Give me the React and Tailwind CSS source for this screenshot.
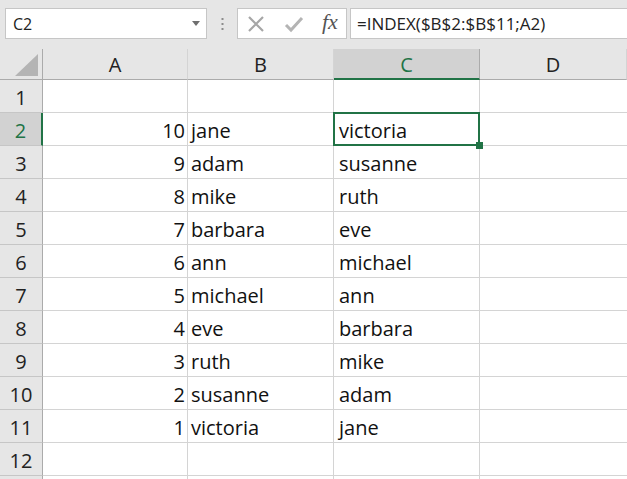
import React from "react";

const cols = ["A", "B", "C", "D"];
const widths = ["w-[145px]", "w-[146px]", "w-[146px]", "w-[147px]"];

const data = [
    ["", "", ""],
    ["10", "jane", "victoria"],
    ["9", "adam", "susanne"],
    ["8", "mike", "ruth"],
    ["7", "barbara", "eve"],
    ["6", "ann", "michael"],
    ["5", "michael", "ann"],
    ["4", "eve", "barbara"],
    ["3", "ruth", "mike"],
    ["2", "susanne", "adam"],
    ["1", "victoria", "jane"],
    ["", "", ""],
];

function Toolbar() {
    return (
        <div className="h-[49px] bg-[#e6e6e6] flex items-start pt-[8px] pl-[5px]">
            <div className="w-[202px] h-[31px] bg-white border border-[#c6c6c6] flex items-center justify-between pl-[7px] pr-[6px] text-[16px] text-[#222]">
                <span>C2</span>
                <svg width="8" height="5" viewBox="0 0 8 5">
                    <path d="M0 0 L8 0 L4 5 Z" fill="#6f6f6f" />
                </svg>
            </div>
            <div className="w-[30px] h-[31px] flex items-center justify-center">
                <svg width="3" height="12" viewBox="0 0 3 12">
                    <rect x="0.5" y="0" width="2" height="2" fill="#8c8c8c" />
                    <rect x="0.5" y="5" width="2" height="2" fill="#8c8c8c" />
                    <rect x="0.5" y="10" width="2" height="2" fill="#8c8c8c" />
                </svg>
            </div>
            <div className="w-[110px] h-[31px] bg-white border border-[#c6c6c6] flex items-center pl-[8px] gap-[18px]">
                <svg width="20" height="20" viewBox="0 0 20 20">
                    <path d="M3 3 L17 17 M17 3 L3 17" stroke="#a6a6a6" strokeWidth="2.2" />
                </svg>
                <svg width="20" height="20" viewBox="0 0 20 20">
                    <path d="M2 11 L7 16 L18 4" stroke="#b4b4b4" strokeWidth="3" fill="none" />
                </svg>
                <span className="text-[22px] italic text-[#555] leading-none -mt-[3px]" style={{ fontFamily: "'Liberation Serif', serif" }}>
                    fx
                </span>
            </div>
            <div className="ml-[3px] flex-1 h-[31px] bg-white border border-[#c6c6c6] border-r-0 flex items-center pl-[6px] text-[17px] text-[#222]">
                =INDEX($B$2:$B$11;A2)
            </div>
        </div>
    );
}

function HeaderRow() {
    return (
        <div className="flex h-[31px]">
            <div className="w-[43px] h-full bg-[#e6e6e6] border-r border-b border-[#ababab] relative">
                <svg className="absolute left-[15px] top-[5px]" width="23" height="22" viewBox="0 0 23 22">
                    <path d="M23 0 L23 22 L0 22 Z" fill="#b4b4b4" />
                </svg>
            </div>
            {cols.map((c, i) =>
                c === "C" ? (
                    <div
                        key={c}
                        className={`${widths[i]} h-full bg-[#d2d2d2] border-r border-[#ababab] border-b-2 border-b-[#217346] flex items-center justify-center pt-[2px] text-[20px] text-[#217346]`}
                    >
                        {c}
                    </div>
                ) : (
                    <div
                        key={c}
                        className={`${widths[i]} h-full bg-[#e6e6e6] border-r border-b border-[#ababab] border-r-[#d4d4d4] flex items-center justify-center pt-[2px] text-[20px] text-[#222]`}
                    >
                        {c}
                    </div>
                )
            )}
        </div>
    );
}

function Row({ n, vals }) {
    const sel = n === 2;
    return (
        <div className="flex h-[33px] shrink-0">
            <div
                className={
                    sel
                        ? "w-[43px] h-full bg-[#d2d2d2] border-r-2 border-r-[#217346] border-b border-b-[#c6c6c6] flex items-center justify-center pt-[3px] text-[20px] text-[#217346]"
                        : "w-[43px] h-full bg-[#e6e6e6] border-r border-r-[#ababab] border-b border-b-[#c6c6c6] flex items-center justify-center pt-[3px] text-[20px] text-[#222]"
                }
            >
                {n}
            </div>
            <div className="w-[145px] h-full border-r border-b border-[#d4d4d4] flex items-center justify-end pr-[2px] pt-[3px] text-[20px] text-[#111]">
                {vals[0]}
            </div>
            <div className="w-[146px] h-full border-r border-b border-[#d4d4d4] flex items-center pl-[3px] pt-[3px] text-[20px] text-[#111]">
                {vals[1]}
            </div>
            <div className="w-[146px] h-full border-r border-b border-[#d4d4d4] flex items-center pl-[5px] pt-[3px] text-[20px] text-[#111] relative">
                {vals[2]}
                {sel && (
                    <>
                        <div className="absolute left-[-1px] top-[-1px] right-[-1px] bottom-[-1px] border-2 border-[#217346] z-10" />
                        <div className="absolute right-[-4px] bottom-[-4px] w-[7px] h-[7px] bg-[#217346] z-20" />
                    </>
                )}
            </div>
            <div className="w-[147px] h-full border-b border-[#d4d4d4]" />
        </div>
    );
}

export default function App() {
    return (
        <div className="w-[627px] h-[479px] overflow-hidden bg-white" style={{ fontFamily: "'Open Sans', Lato, sans-serif" }}>
            <Toolbar />
            <HeaderRow />
            {data.map((vals, i) => (
                <Row key={i} n={i + 1} vals={vals} />
            ))}
            <div className="flex h-[10px]">
                <div className="w-[43px] h-full bg-[#e6e6e6] border-r border-r-[#ababab]" />
                <div className="w-[145px] h-full border-r border-[#d4d4d4]" />
                <div className="w-[146px] h-full border-r border-[#d4d4d4]" />
                <div className="w-[146px] h-full border-r border-[#d4d4d4]" />
            </div>
        </div>
    );
}
